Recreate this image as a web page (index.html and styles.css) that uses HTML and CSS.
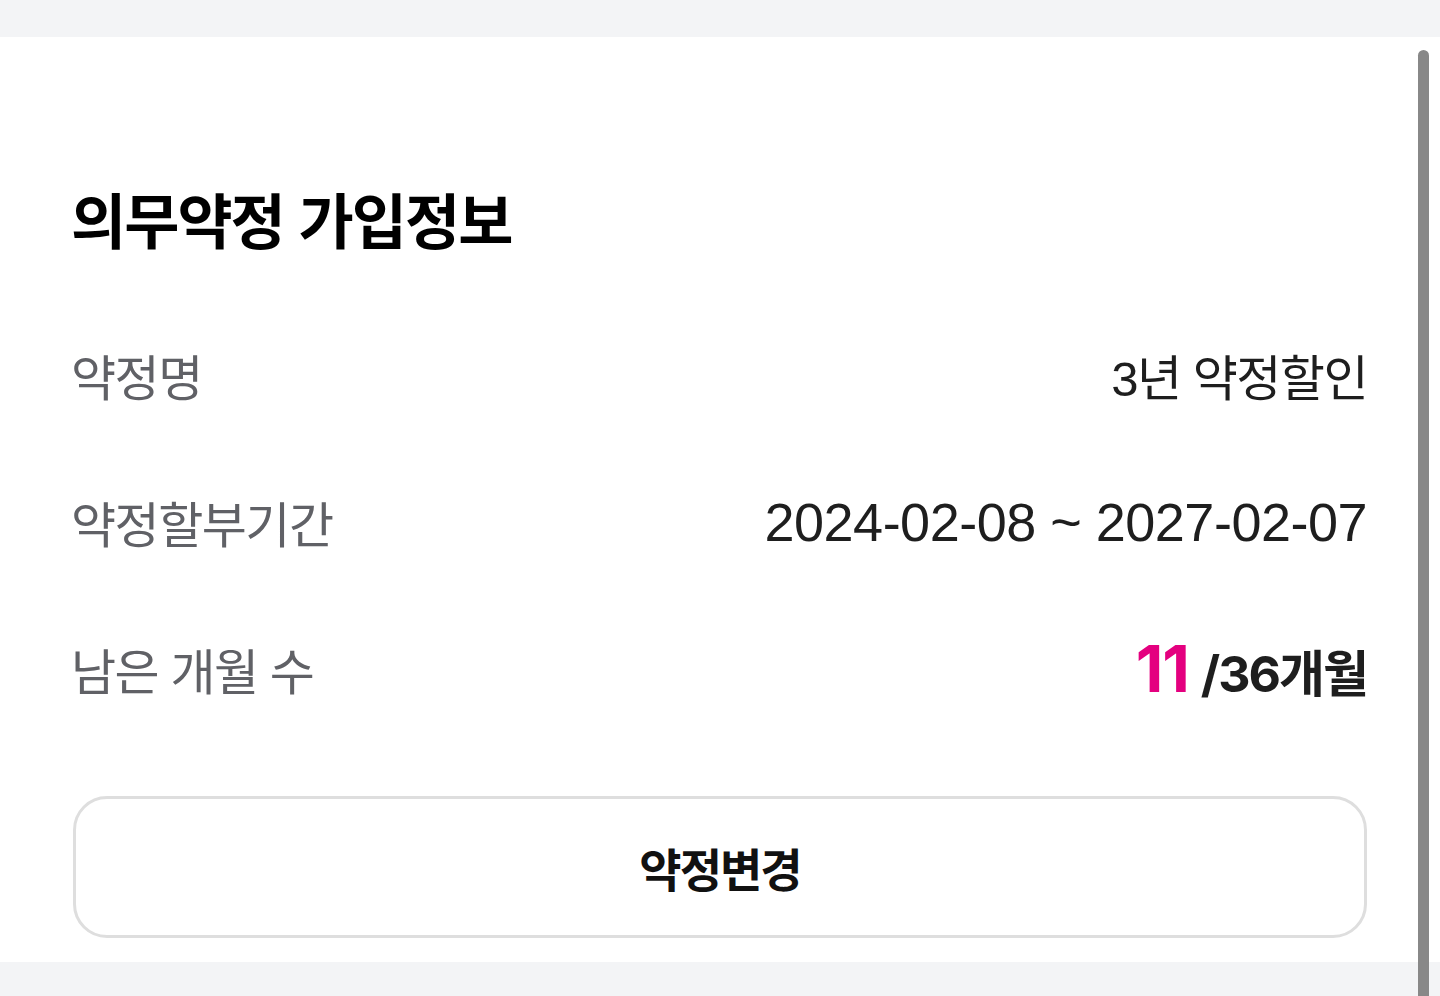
FILE: index.html
```html
<!DOCTYPE html>
<html lang="ko">
    <head>
        <meta charset="UTF-8">
        <meta name="viewport" content="width=device-width, initial-scale=1.0">
        <title>의무약정 가입정보</title>
        <link rel="stylesheet" href="styles.css">
    </head>
    <body>
        <section class="contract-card">
            <h1 class="card-title">의무약정 가입정보</h1>
            <ul class="info-list">
                <li class="info-row">
                    <span class="info-label">약정명</span>
                    <span class="info-value">3년 약정할인</span>
                </li>
                <li class="info-row">
                    <span class="info-label">약정할부기간</span>
                    <span class="info-value num">2024-02-08 ~ 2027-02-07</span>
                </li>
                <li class="info-row">
                    <span class="info-label">남은 개월 수</span>
                    <span class="info-value months"><em class="remain">11</em>/36개월</span>
                </li>
            </ul>
            <button class="change-btn">약정변경</button>
        </section>
        <div class="scrollbar"></div>
    </body>
</html>
```

FILE: styles.css
```css
body {
    margin: 0;
    padding: 37px 0 0;
    background-color: #f3f4f6;
    font-family: "Liberation Sans", "Noto Sans CJK KR", sans-serif;
    height: 996px;
    box-sizing: border-box;
    overflow: hidden;
}

.contract-card {
    background-color: #fff;
    padding: 145px 73px 24px;
    height: 925px;
    box-sizing: border-box;
}

.card-title {
    margin: 0 0 0 -2px;
    font-family: "Noto Sans CJK KR", sans-serif;
    font-size: 60px;
    font-weight: 700;
    letter-spacing: -2px;
    line-height: 72px;
    color: #000;
}

.info-list {
    list-style: none;
    margin: 47px 0 0;
    padding: 0;
}

.info-row {
    display: flex;
    justify-content: space-between;
    align-items: center;
    height: 147px;
}

.info-label {
    margin-left: -2px;
    font-family: "Noto Sans CJK KR", sans-serif;
    font-size: 49px;
    letter-spacing: -1.5px;
    color: #606166;
}

.info-value {
    font-size: 49px;
    letter-spacing: -1.5px;
    color: #1e1e1e;
}

.info-value.num {
    font-size: 54px;
    letter-spacing: -0.5px;
}

.months {
    font-family: "Inter", "Noto Sans CJK KR", sans-serif;
    font-size: 50px;
    font-weight: 700;
    display: flex;
    align-items: baseline;
    gap: 12px;
    letter-spacing: -2px;
}

.remain {
    font-style: normal;
    font-size: 64px;
    color: #e4007f;
    letter-spacing: -1px;
}

.change-btn {
    display: block;
    width: 100%;
    height: 142px;
    margin-top: 54px;
    background-color: #fff;
    border: 3px solid #dedede;
    border-radius: 34px;
    font-family: "Noto Sans CJK KR", sans-serif;
    font-size: 46px;
    font-weight: 700;
    letter-spacing: -2px;
    color: #111;
}

.scrollbar {
    position: absolute;
    top: 50px;
    left: 1418px;
    width: 11px;
    height: 946px;
    border-radius: 6px 6px 0 0;
    background-color: #888;
}
```
